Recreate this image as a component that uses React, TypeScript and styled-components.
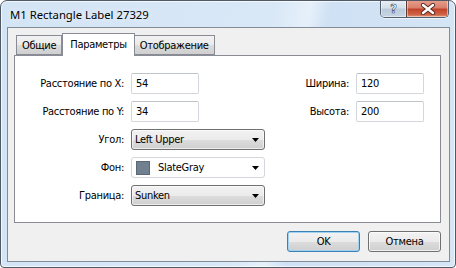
import React from "react";
import styled, { createGlobalStyle } from "styled-components";

const GlobalStyle = createGlobalStyle`
  html, body { margin: 0; padding: 0; background: #ffffff; }
  body { font-family: "DejaVu Sans Condensed", "DejaVu Sans", sans-serif; font-stretch: semi-condensed; letter-spacing: -0.3px; }
  * { box-sizing: border-box; }
`;

const Window = styled.div`
  width: 456px;
  height: 268px;
  display: flex;
  flex-direction: column;
  border: 1px solid #4f5a66;
  border-radius: 7px 7px 4px 4px;
  background: linear-gradient(100deg, #d3e4f5 0%, #d9e8f7 55%, #e6f0fa 62%, #cfe1f4 66%, #d6e6f6 100%);
  box-shadow: inset 0 0 0 1px rgba(255, 255, 255, 0.7);
  overflow: hidden;
`;

const TitleBar = styled.div`
  height: 26px;
  display: flex;
  align-items: flex-start;
  padding-left: 9px;
  padding-right: 6px;
`;

const Title = styled.div`
  font-family: "Noto Sans", "Open Sans", sans-serif;
  font-stretch: normal;
  letter-spacing: 0;
  font-size: 11.3px;
  color: #000;
  line-height: 26px;
  margin-top: 1px;
  flex: 1;
  text-shadow: 0 0 6px rgba(255, 255, 255, 0.9);
`;

const CaptionGroup = styled.div`
  display: flex;
  margin-top: -1px;
  height: 18px;
  border: 1px solid #51606f;
  border-top: none;
  border-radius: 0 0 5px 5px;
  overflow: hidden;
  box-shadow: 0 1px 0 rgba(255, 255, 255, 0.6);
`;

const CaptionButton = styled.div<{ $close?: boolean }>`
  width: ${(p) => (p.$close ? "42px" : "25px")};
  height: 100%;
  display: flex;
  align-items: center;
  justify-content: center;
  border-left: ${(p) => (p.$close ? "1px solid #5b3a36" : "none")};
  background: ${(p) =>
    p.$close
      ? "linear-gradient(to bottom, #e8a08f 0%, #d8806c 45%, #c2432a 55%, #cf6346 85%, #e2977a 100%)"
      : "linear-gradient(to bottom, #e9eff6 0%, #d6e0ea 45%, #bccbdb 55%, #c7d5e3 100%)"};
  box-shadow: inset 0 0 0 1px rgba(255, 255, 255, 0.45);
`;

const HelpGlyph = styled.span`
  font-family: "DejaVu Sans", sans-serif;
  font-weight: bold;
  font-size: 13px;
  line-height: 1;
  color: #ffffff;
  -webkit-text-stroke: 0.6px #3d4b5a;
  margin-top: -1px;
`;

const Client = styled.div`
  margin: 0 5px 0 6px;
  height: 235px;
  background: #f0f0f0;
  border: 1px solid #838b96;
  display: flex;
  flex-direction: column;
  padding: 5px 8px 0 6px;
`;

const TabStrip = styled.div`
  display: flex;
  align-items: flex-end;
  height: 22px;
  padding-left: 2px;
  position: relative;
  z-index: 1;
`;

const Tab = styled.div<{ $active?: boolean }>`
  height: ${(p) => (p.$active ? "23px" : "20px")};
  margin-bottom: ${(p) => (p.$active ? "-1px" : "0")};
  padding: ${(p) => (p.$active ? "0 7px 2px 7px" : "0 5px 0 5px")};
  border: 1px solid #898c95;
  border-bottom: ${(p) => (p.$active ? "none" : "1px solid #898c95")};
  border-left: ${(p) => (p.$active ? "1px solid #898c95" : "none")};
  background: ${(p) =>
    p.$active
      ? "#ffffff"
      : "linear-gradient(to bottom, #f2f2f2 0%, #ebebeb 50%, #dddddd 51%, #cfcfcf 100%)"};
  font-size: 11px;
  color: #000;
  display: flex;
  align-items: center;
  &:first-child { border-left: 1px solid #898c95; }
`;

const Panel = styled.div`
  height: 168px;
  background: #ffffff;
  border: 1px solid #898c95;
  padding: 17px 16px 0 0;
`;

const FieldGrid = styled.div`
  display: grid;
  grid-template-columns: 109px 134px 1fr auto 68px;
  grid-auto-rows: 21px;
  column-gap: 7px;
  row-gap: 7px;
`;

const Label = styled.div<{ $col: number; $row: number }>`
  grid-column: ${(p) => p.$col};
  grid-row: ${(p) => p.$row};
  font-size: 11px;
  color: #000;
  text-align: right;
  align-self: center;
  white-space: nowrap;
`;

const TextBox = styled.div<{ $col: number; $row: number }>`
  grid-column: ${(p) => p.$col};
  grid-row: ${(p) => p.$row};
  width: 68px;
  height: 21px;
  border: 1px solid #d3d6db;
  border-top-color: #bfc3ca;
  border-radius: 2px;
  background: #fff;
  font-size: 11px;
  color: #000;
  display: flex;
  align-items: center;
  padding-left: 4px;
`;

const Combo = styled.div<{ $row: number; $flat?: boolean }>`
  grid-column: 2;
  grid-row: ${(p) => p.$row};
  height: 21px;
  border: 1px solid ${(p) => (p.$flat ? "#d3d6db" : "#707070")};
  border-radius: 3px;
  background: ${(p) =>
    p.$flat
      ? "#ffffff"
      : "linear-gradient(to bottom, #f2f2f2 0%, #ebebeb 50%, #dddddd 51%, #cfcfcf 100%)"};
  box-shadow: ${(p) => (p.$flat ? "none" : "inset 0 0 0 1px rgba(255,255,255,0.6)")};
  display: flex;
  align-items: center;
  padding: 0 5px 0 3px;
  font-size: 11px;
  color: #000;
`;

const ComboText = styled.span`
  flex: 1;
`;

const Swatch = styled.span<{ $color: string }>`
  width: 14px;
  height: 14px;
  background: ${(p) => p.$color};
  border: 1px solid #5d6773;
  margin: 0 8px 0 1px;
`;

const Footer = styled.div`
  display: flex;
  justify-content: flex-end;
  gap: 8px;
  margin-top: 8px;
`;

const Button = styled.div<{ $default?: boolean }>`
  width: 73px;
  height: 21px;
  border: 1px solid ${(p) => (p.$default ? "#3c7fb1" : "#707070")};
  border-radius: 3px;
  background: linear-gradient(to bottom, #f2f2f2 0%, #ebebeb 50%, #dddddd 51%, #cfcfcf 100%);
  box-shadow: inset 0 0 0 1px ${(p) => (p.$default ? "#9fd3f1" : "rgba(255,255,255,0.7)")};
  display: flex;
  align-items: center;
  justify-content: center;
  font-size: 11px;
  color: #000;
`;

const Arrow = () => (
  <svg width="7" height="4" viewBox="0 0 7 4">
    <path d="M0 0 H7 L3.5 4 Z" fill="#000" />
  </svg>
);

const CloseIcon = () => (
  <svg width="16" height="12" viewBox="0 0 16 12">
    <path d="M3 2 L13 10 M13 2 L3 10" stroke="#5a2a22" strokeWidth="4.2" strokeLinecap="round" fill="none" />
    <path d="M3 2 L13 10 M13 2 L3 10" stroke="#ffffff" strokeWidth="2.4" strokeLinecap="round" fill="none" />
  </svg>
);

export default function App() {
  return (
    <>
      <GlobalStyle />
      <Window>
        <TitleBar>
          <Title>M1 Rectangle Label 27329</Title>
          <CaptionGroup>
            <CaptionButton>
              <HelpGlyph>?</HelpGlyph>
            </CaptionButton>
            <CaptionButton $close>
              <CloseIcon />
            </CaptionButton>
          </CaptionGroup>
        </TitleBar>
        <Client>
          <TabStrip>
            <Tab>Общие</Tab>
            <Tab $active>Параметры</Tab>
            <Tab>Отображение</Tab>
          </TabStrip>
          <Panel>
            <FieldGrid>
              <Label $col={1} $row={1}>Расстояние по X:</Label>
              <TextBox $col={2} $row={1}>54</TextBox>
              <Label $col={4} $row={1}>Ширина:</Label>
              <TextBox $col={5} $row={1}>120</TextBox>

              <Label $col={1} $row={2}>Расстояние по Y:</Label>
              <TextBox $col={2} $row={2}>34</TextBox>
              <Label $col={4} $row={2}>Высота:</Label>
              <TextBox $col={5} $row={2}>200</TextBox>

              <Label $col={1} $row={3}>Угол:</Label>
              <Combo $row={3}>
                <ComboText>Left Upper</ComboText>
                <Arrow />
              </Combo>

              <Label $col={1} $row={4}>Фон:</Label>
              <Combo $row={4} $flat>
                <Swatch $color="#708090" />
                <ComboText>SlateGray</ComboText>
                <Arrow />
              </Combo>

              <Label $col={1} $row={5}>Граница:</Label>
              <Combo $row={5}>
                <ComboText>Sunken</ComboText>
                <Arrow />
              </Combo>
            </FieldGrid>
          </Panel>
          <Footer>
            <Button $default>OK</Button>
            <Button>Отмена</Button>
          </Footer>
        </Client>
      </Window>
    </>
  );
}
